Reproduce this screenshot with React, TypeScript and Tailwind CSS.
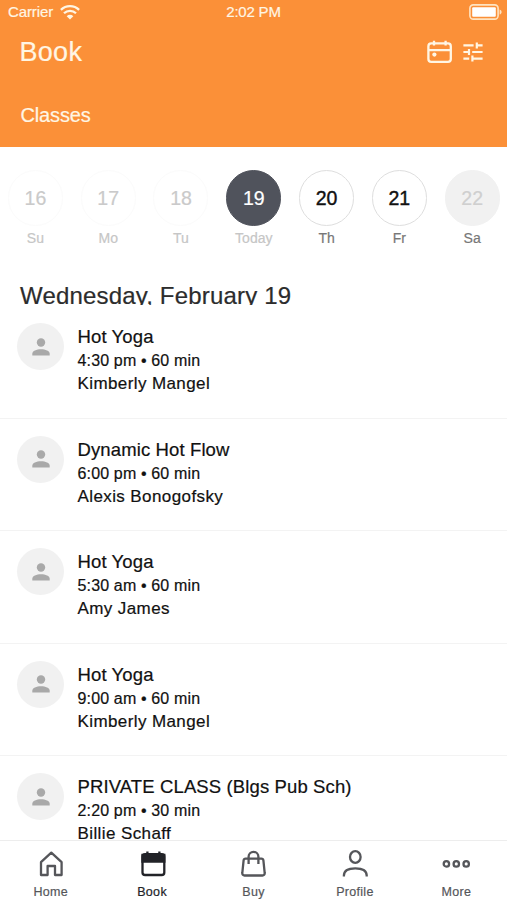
import type { ReactNode } from "react";
import { clsx } from "clsx";

const days = [
  { date: 16, label: "Su", state: "past" },
  { date: 17, label: "Mo", state: "past" },
  { date: 18, label: "Tu", state: "past" },
  { date: 19, label: "Today", state: "selected" },
  { date: 20, label: "Th", state: "open" },
  { date: 21, label: "Fr", state: "open" },
  { date: 22, label: "Sa", state: "closed" },
];

const classes = [
  { name: "Hot Yoga", time: "4:30 pm • 60 min", teacher: "Kimberly Mangel" },
  { name: "Dynamic Hot Flow", time: "6:00 pm • 60 min", teacher: "Alexis Bonogofsky" },
  { name: "Hot Yoga", time: "5:30 am • 60 min", teacher: "Amy James" },
  { name: "Hot Yoga", time: "9:00 am • 60 min", teacher: "Kimberly Mangel" },
  { name: "PRIVATE CLASS (Blgs Pub Sch)", time: "2:20 pm • 30 min", teacher: "Billie Schaff" },
];

const tabs: { label: string; active?: boolean; icon: ReactNode }[] = [
  {
    label: "Home",
    icon: <path strokeLinejoin="round" d="M5 13.200 15.300 3.600l10.300 9.600v12.800h-6.600v-9h-7.400v9H5z" />,
  },
  {
    label: "Book",
    active: true,
    icon: (
      <>
        <rect x="6.500" y="5.200" width="21.800" height="20.800" rx="2.600" />
        <path d="M6.500 6h21.800v6.600H6.500z" fill="currentColor" />
        <path d="M11.400 2.600v4M23.400 2.600v4" />
      </>
    ),
  },
  {
    label: "Buy",
    icon: (
      <>
        <path d="M7.600 9.700h15.800a2 2 0 0 1 2 1.700l1.300 12.600a2.200 2.200 0 0 1-2.200 2.500h-18a2.200 2.200 0 0 1-2.200-2.500l1.300-12.600a2 2 0 0 1 2-1.700z" />
        <path d="M10.600 15V7.700a4.900 4.900 0 0 1 9.800 0V15" />
      </>
    ),
  },
  {
    label: "Profile",
    icon: (
      <>
        <ellipse cx="15.300" cy="8" rx="5.300" ry="5.800" />
        <path d="M3.900 27.400v-.8c0-4.600 4.400-7.200 11.400-7.200s11.400 2.600 11.400 7.200v.8" />
      </>
    ),
  },
  {
    label: "More",
    icon: (
      <>
        <circle cx="5.400" cy="14.900" r="2.700" />
        <circle cx="15.300" cy="14.900" r="2.700" />
        <circle cx="25.200" cy="14.900" r="2.700" />
      </>
    ),
  },
];

function WifiIcon() {
  return (
    <svg width="20" height="15" viewBox="0 0 20 15" fill="none" stroke="currentColor" strokeWidth="2.3">
      <path d="M.9 4.900a13 13 0 0 1 18.200 0M4 8.300a8.600 8.600 0 0 1 12 0" />
      <path d="M10 14.600 6.700 11.200a4.700 4.700 0 0 1 6.600 0z" fill="currentColor" stroke="none" />
    </svg>
  );
}

function BatteryIcon() {
  return (
    <svg width="33" height="16" viewBox="0 0 33 16" fill="none">
      <rect x=".9" y=".9" width="28.200" height="14.200" rx="3.400" stroke="#ffe3c0" strokeWidth="1.600" />
      <rect x="3.200" y="3.200" width="23.600" height="9.600" rx="1" fill="#fff" />
      <path d="M30.600 5.400c1.400.4 2 1.400 2 2.600s-.6 2.200-2 2.600z" fill="#ffe3c0" />
    </svg>
  );
}

function CalendarIcon() {
  return (
    <svg width="26" height="24" viewBox="0 0 26 24" fill="none" stroke="currentColor" strokeWidth="2.300">
      <rect x="1.400" y="3.400" width="22.400" height="18.400" rx="2.800" />
      <path d="M1.400 10.200h22.400M7 .8v4.600M18.600 .8v4.600" />
      <circle cx="7.400" cy="14.600" r="2.100" fill="currentColor" stroke="none" />
    </svg>
  );
}

function TuneIcon() {
  return (
    <svg width="20" height="20" viewBox="0 0 20 20" fill="none" stroke="currentColor" strokeWidth="2.200">
      <path d="M.4 3.400h10.200M13.800 3.400h5.800M13.800 .4v6" />
      <path d="M.4 10h5.600M6 7v6M9.200 10h10.400" />
      <path d="M.4 16.600h5.800M9.400 16.600h10.200M9.400 13.600v6" />
    </svg>
  );
}

function Avatar() {
  return (
    <div className="mt-[17px] flex h-[47px] w-[47px] shrink-0 items-center justify-center rounded-full bg-[#f1f1f1]">
      <svg width="18" height="18" viewBox="0 0 18 18" fill="#a9a9a9">
        <circle cx="9" cy="4.500" r="4.200" />
        <path d="M.3 17.500v-1.700c0-3 4.200-4.500 8.700-4.500s8.700 1.500 8.700 4.500v1.700z" />
      </svg>
    </div>
  );
}

export default function App() {
  return (
    <div className="flex h-[900px] w-[507px] flex-col overflow-hidden bg-white font-['Liberation_Sans',Arial,sans-serif] text-[#111] [-webkit-text-stroke:0.2px]">
      <header className="h-[147px] shrink-0 bg-[#fb9038] text-[#fff6e4]">
        <div className="grid h-6 grid-cols-3 items-center pr-[5px] pl-2 text-[15px]">
          <div className="flex items-center gap-[7px]">
            <span className="tracking-[-0.1px]">Carrier</span>
            <WifiIcon />
          </div>
          <span className="-ml-[3px] text-center tracking-[-0.2px]">2:02 PM</span>
          <div className="flex justify-end">
            <BatteryIcon />
          </div>
        </div>
        <div className="flex h-14 items-center justify-between pr-[24px] pl-[19.5px]">
          <h1 className="text-[27px] leading-8 tracking-[0.3px]">Book</h1>
          <div className="flex items-center gap-[10px]">
            <CalendarIcon />
            <TuneIcon />
          </div>
        </div>
        <div className="pt-[23px] pl-[20.5px] text-[20px] leading-6 tracking-[-0.15px]">Classes</div>
      </header>

      <div className="-ml-px flex w-[510px] shrink-0 pt-[23px]">
        {days.map((day) => (
          <div key={day.date} className="flex w-[72.8px] shrink-0 flex-col items-center">
            <div
              className={clsx(
                "flex h-[56px] w-[55px] items-center justify-center rounded-full border pt-px text-[19.5px]",
                day.state === "past" && "border-[#fbfbfb] text-[#cacaca]",
                day.state === "selected" && "border-[#50535c] bg-[#50535c] text-white",
                day.state === "open" && "border-[#dedede] text-[#111] [-webkit-text-stroke:0.4px]",
                day.state === "closed" && "border-[#f1f1f1] bg-[#f1f1f1] text-[#cfcfcf]",
              )}
            >
              {day.date}
            </div>
            <div
              className={clsx(
                "mt-[2px] text-[14px] leading-5",
                day.state === "past" || day.state === "selected" ? "text-[#c6c6c6]" : "text-[#777]",
              )}
            >
              {day.label}
            </div>
          </div>
        ))}
      </div>

      <h2 className="mt-[33px] mb-[1px] h-[24px] shrink-0 overflow-hidden pl-5 text-[24px] leading-[30px] tracking-[0.18px] text-[#2c2c2c]">
        Wednesday, February 19
      </h2>

      <main className="min-h-0 flex-1 overflow-hidden">
        {classes.map((item, i) => (
          <div key={i} className="flex h-[112.5px] gap-[13.5px] border-b border-[#f3f3f3] pl-[17px]">
            <Avatar />
            <div className="pt-[19px] whitespace-nowrap">
              <div className="text-[18.5px] leading-6 tracking-[0.12px]">{item.name}</div>
              <div className="text-[16px] leading-[23px] tracking-[0.15px]">{item.time}</div>
              <div className="text-[17px] leading-[23px] tracking-[0.4px]">{item.teacher}</div>
            </div>
          </div>
        ))}
      </main>

      <nav className="grid h-[60px] shrink-0 grid-cols-5 border-t border-[#ededed] bg-white">
        {tabs.map((tab) => (
          <div
            key={tab.label}
            className={clsx("flex flex-col items-center pt-2", tab.active ? "text-[#222328]" : "text-[#55565a]")}
          >
            <svg width="32" height="30" viewBox={tab.active ? "0 0 32 30" : "-1 0 32 30"} fill="none" stroke="currentColor" strokeWidth="2.300">
              {tab.icon}
            </svg>
            <span className="mt-[5px] text-[12.5px] leading-4 tracking-[0.3px]">{tab.label}</span>
          </div>
        ))}
      </nav>
    </div>
  );
}
